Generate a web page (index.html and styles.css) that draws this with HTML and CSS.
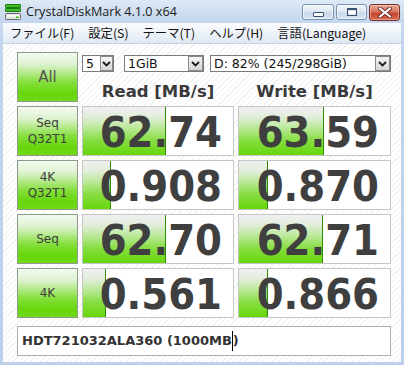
FILE: index.html
```html
<!DOCTYPE html>
<html lang="ja">
<head>
<meta charset="utf-8">
<title>CrystalDiskMark 4.1.0 x64</title>
<link rel="stylesheet" href="styles.css">
</head>
<body>
<div class="window">
  <div class="titlebar">
    <svg class="appicon" width="16" height="16" viewBox="0 0 16 16">
      <rect x="0.5" y="0.5" width="15" height="3" rx="0.5" fill="#3fbf2a" stroke="#1f7a14"/>
      <rect x="0.5" y="4.5" width="15" height="3" rx="0.5" fill="#3fbf2a" stroke="#1f7a14"/>
      <rect x="0.5" y="9.5" width="15" height="6" rx="1" fill="#e4e4e4" stroke="#6a6a6a"/>
      <rect x="2" y="11" width="12" height="1.5" fill="#ffffff"/>
      <rect x="11" y="12.5" width="2.5" height="1.5" fill="#2fbf1a"/>
    </svg>
    <span class="title">CrystalDiskMark 4.1.0 x64</span>
    <div class="caption-btns">
      <div class="cbtn cmin"><span class="min-glyph"></span></div>
      <div class="cbtn cmax"><span class="max-glyph"></span></div>
      <div class="cbtn cclose">
        <svg width="14" height="11" viewBox="0 0 14 11">
          <path d="M2 1.5 L12 9.5 M12 1.5 L2 9.5" stroke="#6b2a20" stroke-width="4" stroke-linecap="round"/>
          <path d="M2 1.5 L12 9.5 M12 1.5 L2 9.5" stroke="#ffffff" stroke-width="2.2" stroke-linecap="round"/>
        </svg>
      </div>
    </div>
  </div>
  <div class="menubar">
    <span class="mitem">ファイル(F)</span>
    <span class="mitem">設定(S)</span>
    <span class="mitem">テーマ(T)</span>
    <span class="mitem">ヘルプ(H)</span>
    <span class="mitem">言語(Language)</span>
  </div>
  <div class="client">
    <div class="grid">
      <div class="lbl lbl-all">All</div>
      <div class="top">
        <div class="selects">
          <div class="sel sel-count"><span class="seltext">5</span><span class="drop"><svg width="9" height="6" viewBox="0 0 9 6"><path d="M1 1 L4.5 4.5 L8 1" fill="none" stroke="#1a1a1a" stroke-width="1.8"/></svg></span></div>
          <div class="sel sel-size"><span class="seltext">1GiB</span><span class="drop"><svg width="9" height="6" viewBox="0 0 9 6"><path d="M1 1 L4.5 4.5 L8 1" fill="none" stroke="#1a1a1a" stroke-width="1.8"/></svg></span></div>
          <div class="sel sel-drive"><span class="seltext">D: 82% (245/298GiB)</span><span class="drop"><svg width="9" height="6" viewBox="0 0 9 6"><path d="M1 1 L4.5 4.5 L8 1" fill="none" stroke="#1a1a1a" stroke-width="1.8"/></svg></span></div>
        </div>
        <div class="heads">
          <div class="head">Read [MB/s]</div>
          <div class="head">Write [MB/s]</div>
        </div>
      </div>

      <div class="lbl"><span>Seq</span><span>Q32T1</span></div>
      <div class="val"><div class="bar" style="width:83px"></div><span class="num">62.74</span></div>
      <div class="val"><div class="bar" style="width:85px"></div><span class="num">63.59</span></div>

      <div class="lbl"><span>4K</span><span>Q32T1</span></div>
      <div class="val"><div class="bar" style="width:28px"></div><span class="num">0.908</span></div>
      <div class="val"><div class="bar" style="width:29px"></div><span class="num">0.870</span></div>

      <div class="lbl lbl-one"><span>Seq</span></div>
      <div class="val"><div class="bar" style="width:83px"></div><span class="num">62.70</span></div>
      <div class="val"><div class="bar" style="width:84px"></div><span class="num">62.71</span></div>

      <div class="lbl lbl-one"><span>4K</span></div>
      <div class="val"><div class="bar" style="width:23px"></div><span class="num">0.561</span></div>
      <div class="val"><div class="bar" style="width:29px"></div><span class="num">0.866</span></div>
    </div>
    <div class="comment">HDT721032ALA360 (1000MB<span class="caret"></span>)</div>
  </div>
</div>
</body>
</html>
```
FILE: styles.css
```css
html, body {
  margin: 0;
  padding: 0;
}
body {
  width: 404px;
  height: 365px;
  overflow: hidden;
  background: #c4d6ec;
}
.window {
  width: 404px;
  height: 365px;
  display: flex;
  flex-direction: column;
  background: linear-gradient(to bottom, #d3e1f2 0px, #c2d5ec 40px, #bcd0ea 100%);
  box-sizing: border-box;
}
.titlebar {
  height: 23px;
  display: flex;
  align-items: center;
  padding: 0 4px 0 5px;
  background: linear-gradient(to bottom, #dfe9f6 0%, #cfdef0 50%, #c3d6ee 100%);
}
.appicon {
  flex: none;
}
.title {
  margin-left: 5px;
  font-family: "Open Sans", "Noto Sans", sans-serif;
  font-size: 12.6px;
  color: #1a1a1a;
  flex: 1;
  white-space: nowrap;
}
.caption-btns {
  display: flex;
  gap: 2px;
  align-self: flex-start;
  margin-top: 4px;
}
.cbtn {
  width: 31px;
  height: 16px;
  border: 1px solid #7d93b2;
  border-radius: 3px;
  box-sizing: border-box;
  display: flex;
  align-items: center;
  justify-content: center;
  background: linear-gradient(to bottom, #f2f6fb 0%, #dfe8f3 45%, #cad9eb 55%, #d6e3f2 100%);
  box-shadow: inset 0 0 0 1px rgba(255,255,255,0.6);
}
.cmin { width: 32px; }
.cclose {
  height: 17px;
  border-color: #7a3226;
  background: linear-gradient(to bottom, #eaa899 0%, #d9745f 45%, #c7462f 55%, #d46a4f 100%);
  box-shadow: inset 0 0 0 1px rgba(255,220,210,0.45);
}
.min-glyph {
  width: 9px;
  height: 3px;
  margin-top: 5px;
  background: #ffffff;
  border: 1px solid #39506e;
  border-radius: 1px;
}
.max-glyph {
  width: 8px;
  height: 5px;
  border: 1px solid #39506e;
  border-top-width: 2px;
  background: #ffffff;
  box-shadow: inset 0 0 0 1px #e0e8f2;
}
.menubar {
  height: 20px;
  margin: 0 3px;
  display: flex;
  align-items: center;
  gap: 14px;
  padding-left: 7px;
  background: linear-gradient(to bottom, #fbfcfe 0%, #eef3f9 50%, #dfe8f3 100%);
  border-bottom: 1px solid #c7d4e4;
  font-family: "Noto Sans CJK JP", "Noto Sans", sans-serif;
  font-size: 12.3px;
  color: #111111;
  white-space: nowrap;
}
.client {
  flex: 1;
  margin: 0 3px 3px 3px;
  padding: 8px 0 0 14px;
  background-color: #fafafa;
  background-image: repeating-linear-gradient(135deg, #ffffff 0px, #ffffff 3px, #f1f1f1 3px, #f1f1f1 4px);
}
.grid {
  display: grid;
  grid-template-columns: 61px 152px 153px;
  grid-auto-rows: 50px;
  column-gap: 4px;
  row-gap: 4px;
}
.lbl {
  box-sizing: border-box;
  border: 1px solid #8e9a8e;
  background: linear-gradient(to bottom, #f3faef 0%, #e0f3d4 22%, #b4ea8a 42%, #86df3e 60%, #66d60a 85%, #70da18 100%);
  display: flex;
  flex-direction: column;
  align-items: center;
  justify-content: center;
  font-family: "DejaVu Sans", sans-serif;
  font-size: 12px;
  line-height: 16px;
  color: #3d3d3d;
}
.lbl-all {
  font-size: 15px;
  color: #555555;
}
.top {
  grid-column: 2 / span 2;
  display: flex;
  flex-direction: column;
}
.selects {
  display: flex;
  margin-top: 3px;
  height: 17px;
}
.sel {
  box-sizing: border-box;
  height: 17px;
  border: 1px solid #7b7b7b;
  background: #ffffff;
  display: flex;
  align-items: stretch;
  font-family: "DejaVu Sans", sans-serif;
  font-size: 12.5px;
  color: #111111;
}
.sel-count { width: 32px; }
.sel-size { width: 80px; margin-left: 10px; }
.sel-drive { width: 181px; margin-left: 6px; }
.seltext {
  flex: 1;
  padding-left: 3px;
  line-height: 15px;
  white-space: nowrap;
  overflow: hidden;
}
.drop {
  width: 15px;
  box-sizing: border-box;
  border: 1px solid #8a8a8a;
  background: linear-gradient(to bottom, #f4f4f4 0%, #e6e6e6 50%, #d6d6d6 100%);
  display: flex;
  align-items: center;
  justify-content: center;
}
.sel-count .drop { width: 13px; }
.heads {
  display: grid;
  grid-template-columns: 152px 153px;
  column-gap: 4px;
  padding-top: 10px;
}
.head {
  text-align: center;
  font-family: "DejaVu Sans", sans-serif;
  font-weight: bold;
  font-size: 16.5px;
  line-height: 19px;
  color: #3a3a3a;
  white-space: nowrap;
}
.val {
  position: relative;
  box-sizing: border-box;
  border: 1px solid #c6c6c6;
  background: #ffffff;
}
.bar {
  position: absolute;
  left: 0;
  top: 0;
  bottom: 0;
  box-sizing: border-box;
  border-right: 1px solid #2f8a06;
  background: linear-gradient(to bottom, #f0f0f0 0%, #e2eedc 20%, #b8e894 45%, #86dd40 70%, #66d60c 100%);
}
.num {
  position: relative;
  display: block;
  text-align: right;
  padding: 0 11px 0 0;
  font-family: "DejaVu Sans Condensed", "DejaVu Sans", sans-serif;
  font-stretch: condensed;
  font-weight: bold;
  font-size: 43px;
  line-height: 48px;
  height: 48px;
  margin-top: 1px;
  color: #3f3f3f;
}
.comment {
  box-sizing: border-box;
  width: 374px;
  height: 30px;
  margin-top: 8px;
  border: 1px solid #adadad;
  background: #ffffff;
  padding-left: 4px;
  font-family: "DejaVu Sans", sans-serif;
  font-weight: bold;
  font-size: 13px;
  line-height: 28px;
  color: #333333;
  white-space: nowrap;
}
.caret {
  display: inline-block;
  width: 1px;
  height: 20px;
  background: #000000;
  vertical-align: middle;
  margin-top: -2px;
}
```
